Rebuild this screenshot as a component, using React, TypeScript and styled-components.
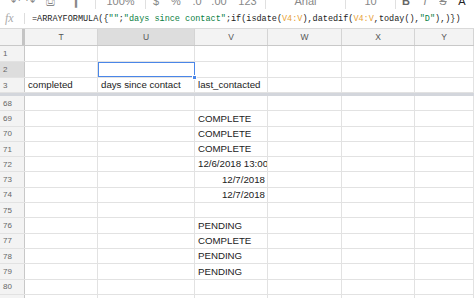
import React from "react";
import styled, { createGlobalStyle } from "styled-components";

const Global = createGlobalStyle`
  html, body { margin: 0; padding: 0; background: #fff; }
  body { width: 474px; height: 298px; overflow: hidden; font-family: "Liberation Sans", Arial, sans-serif; }
`;

const Page = styled.div`
  width: 474px;
  height: 298px;
  overflow: hidden;
  display: flex;
  flex-direction: column;
  background: #fff;
`;

const Toolbar = styled.div`
  height: 9px;
  flex: none;
  display: flex;
  align-items: flex-end;
  overflow: hidden;
`;

const ToolItem = styled.div<{ $w: number; $sep?: boolean }>`
  width: ${(p) => p.$w}px;
  flex: none;
  height: 9px;
  display: flex;
  align-items: flex-end;
  justify-content: center;
  border-right: ${(p) => (p.$sep ? "1px solid #e0e0e0" : "none")};
  box-sizing: border-box;
  font-size: 11px;
  line-height: 11px;
  color: #888;
  overflow: hidden;
  & > span { margin-bottom: 2px; }
`;

const BoldGlyph = styled.span`
  font-weight: bold;
  color: #666;
`;

const FormulaBar = styled.div`
  height: 19px;
  flex: none;
  display: flex;
  align-items: center;
  border-bottom: 1px solid #d9d9d9;
`;

const Fx = styled.div`
  width: 25px;
  flex: none;
  font-family: "Liberation Serif", serif;
  font-style: italic;
  font-size: 12px;
  color: #aaa;
  padding-left: 5px;
  box-sizing: border-box;
  border-right: 1px solid #ddd;
  height: 11px;
  line-height: 10px;
`;

const Formula = styled.div`
  padding-left: 7px;
  font-family: "Liberation Mono", "DejaVu Sans Mono", monospace;
  font-size: 8.5px;
  color: #222;
  white-space: pre;
`;

const Str = styled.span`
  color: #0b8043;
`;
const Rng = styled.span`
  color: #e8a33a;
`;

const cols = "25px 73px 97px 73px 74px 73px 1fr";

const HeaderRow = styled.div`
  height: 17px;
  flex: none;
  display: grid;
  grid-template-columns: ${cols};
  background: #f3f3f3;
  border-bottom: 1px solid #c8c8c8;
  box-sizing: border-box;
`;

const Corner = styled.div`
  border-right: 3px solid #c4c4c4;
  background: #f3f3f3;
`;

const ColHead = styled.div<{ $sel?: boolean }>`
  background: ${(p) => (p.$sel ? "#dddddd" : "#f3f3f3")};
  border-right: 1px solid #d4d4d4;
  display: flex;
  align-items: center;
  justify-content: center;
  font-size: 8.5px;
  color: #555;
`;

const Row = styled.div<{ $h: number }>`
  height: ${(p) => p.$h}px;
  flex: none;
  display: grid;
  grid-template-columns: ${cols};
  box-sizing: border-box;
  border-bottom: 1px solid #e2e2e2;
`;

const RowHead = styled.div<{ $sel?: boolean }>`
  background: ${(p) => (p.$sel ? "#dddddd" : "#f3f3f3")};
  border-right: 1px solid #c8c8c8;
  display: flex;
  align-items: center;
  padding-left: 3px;
  font-size: 8px;
  color: #666;
`;

const Cell = styled.div<{ $right?: boolean; $sel?: boolean }>`
  position: relative;
  border-right: 1px solid #e2e2e2;
  display: flex;
  align-items: flex-end;
  justify-content: ${(p) => (p.$right ? "flex-end" : "flex-start")};
  padding: 0 2px 1px 3px;
  font-size: 9.7px;
  line-height: 12px;
  color: #222;
  white-space: nowrap;
  overflow: ${(p) => (p.$sel ? "visible" : "hidden")};
  box-sizing: border-box;
  outline: ${(p) => (p.$sel ? "1px solid #4a86e8" : "none")};
  outline-offset: -1px;
`;

const Handle = styled.div`
  position: absolute;
  right: -3px;
  bottom: -3px;
  width: 5px;
  height: 5px;
  background: #4a86e8;
  border: 1px solid #fff;
  box-sizing: border-box;
  z-index: 2;
`;

const FreezeBar = styled.div`
  height: 3px;
  flex: none;
  background: #d3d6dc;
`;

type RowData = { n: string; v?: string; right?: boolean; t?: string; u?: string; h: number };

const top: RowData[] = [
  { n: "1", h: 16 },
  { n: "2", h: 16 },
  { n: "3", t: "completed", u: "days since contact", v: "last_contacted", h: 15 },
];

const body: RowData[] = [
  { n: "68", h: 15.3 },
  { n: "69", v: "COMPLETE", h: 15.3 },
  { n: "70", v: "COMPLETE", h: 15.3 },
  { n: "71", v: "COMPLETE", h: 15.3 },
  { n: "72", v: "12/6/2018 13:00:00", h: 15.3 },
  { n: "73", v: "12/7/2018", right: true, h: 15.3 },
  { n: "74", v: "12/7/2018", right: true, h: 15.3 },
  { n: "75", h: 15.3 },
  { n: "76", v: "PENDING", h: 15.3 },
  { n: "77", v: "COMPLETE", h: 15.3 },
  { n: "78", v: "PENDING", h: 15.3 },
  { n: "79", v: "PENDING", h: 15.3 },
  { n: "80", h: 15.3 },
  { n: "81", h: 15.3 },
];

const SheetRow = ({ r }: { r: RowData }) => {
  const sel = r.n === "2";
  return (
    <Row $h={r.h}>
      <RowHead $sel={sel}>{r.n}</RowHead>
      <Cell>{r.t}</Cell>
      <Cell $sel={sel}>
        {r.u}
        {sel && <Handle />}
      </Cell>
      <Cell $right={r.right}>{r.v}</Cell>
      <Cell />
      <Cell />
      <Cell />
    </Row>
  );
};

export default function App() {
  return (
    <Page>
      <Global />
      <Toolbar>
        <ToolItem $w={8} />
        <ToolItem $w={15}><span>↶</span></ToolItem>
        <ToolItem $w={15}><span>↷</span></ToolItem>
        <ToolItem $w={25}><span>⎙</span></ToolItem>
        <ToolItem $w={33} $sep><span>▎</span></ToolItem>
        <ToolItem $w={50} $sep><span>100%</span></ToolItem>
        <ToolItem $w={20}><span>$</span></ToolItem>
        <ToolItem $w={20}><span>%</span></ToolItem>
        <ToolItem $w={22}><span>.0</span></ToolItem>
        <ToolItem $w={22}><span>.00</span></ToolItem>
        <ToolItem $w={36} $sep><span>123</span></ToolItem>
        <ToolItem $w={80} $sep><span>Arial</span></ToolItem>
        <ToolItem $w={50} $sep><span>10</span></ToolItem>
        <ToolItem $w={20}><BoldGlyph>B</BoldGlyph></ToolItem>
        <ToolItem $w={18}><span style={{ fontStyle: "italic" }}>I</span></ToolItem>
        <ToolItem $w={18}><span style={{ textDecoration: "line-through" }}>S</span></ToolItem>
        <ToolItem $w={20}><span style={{ color: "#222" }}>A</span></ToolItem>
      </Toolbar>
      <FormulaBar>
        <Fx>fx</Fx>
        <Formula>
          =ARRAYFORMULA({"{"}<Str>""</Str>;<Str>"days since contact"</Str>;if(isdate(<Rng>V4:V</Rng>),datedif(<Rng>V4:V</Rng>,today(),<Str>"D"</Str>),){"}"})
        </Formula>
      </FormulaBar>
      <HeaderRow>
        <Corner />
        <ColHead>T</ColHead>
        <ColHead $sel>U</ColHead>
        <ColHead>V</ColHead>
        <ColHead>W</ColHead>
        <ColHead>X</ColHead>
        <ColHead>Y</ColHead>
      </HeaderRow>
      {top.map((r) => (
        <SheetRow key={r.n} r={r} />
      ))}
      <FreezeBar />
      {body.map((r) => (
        <SheetRow key={r.n} r={r} />
      ))}
    </Page>
  );
}
